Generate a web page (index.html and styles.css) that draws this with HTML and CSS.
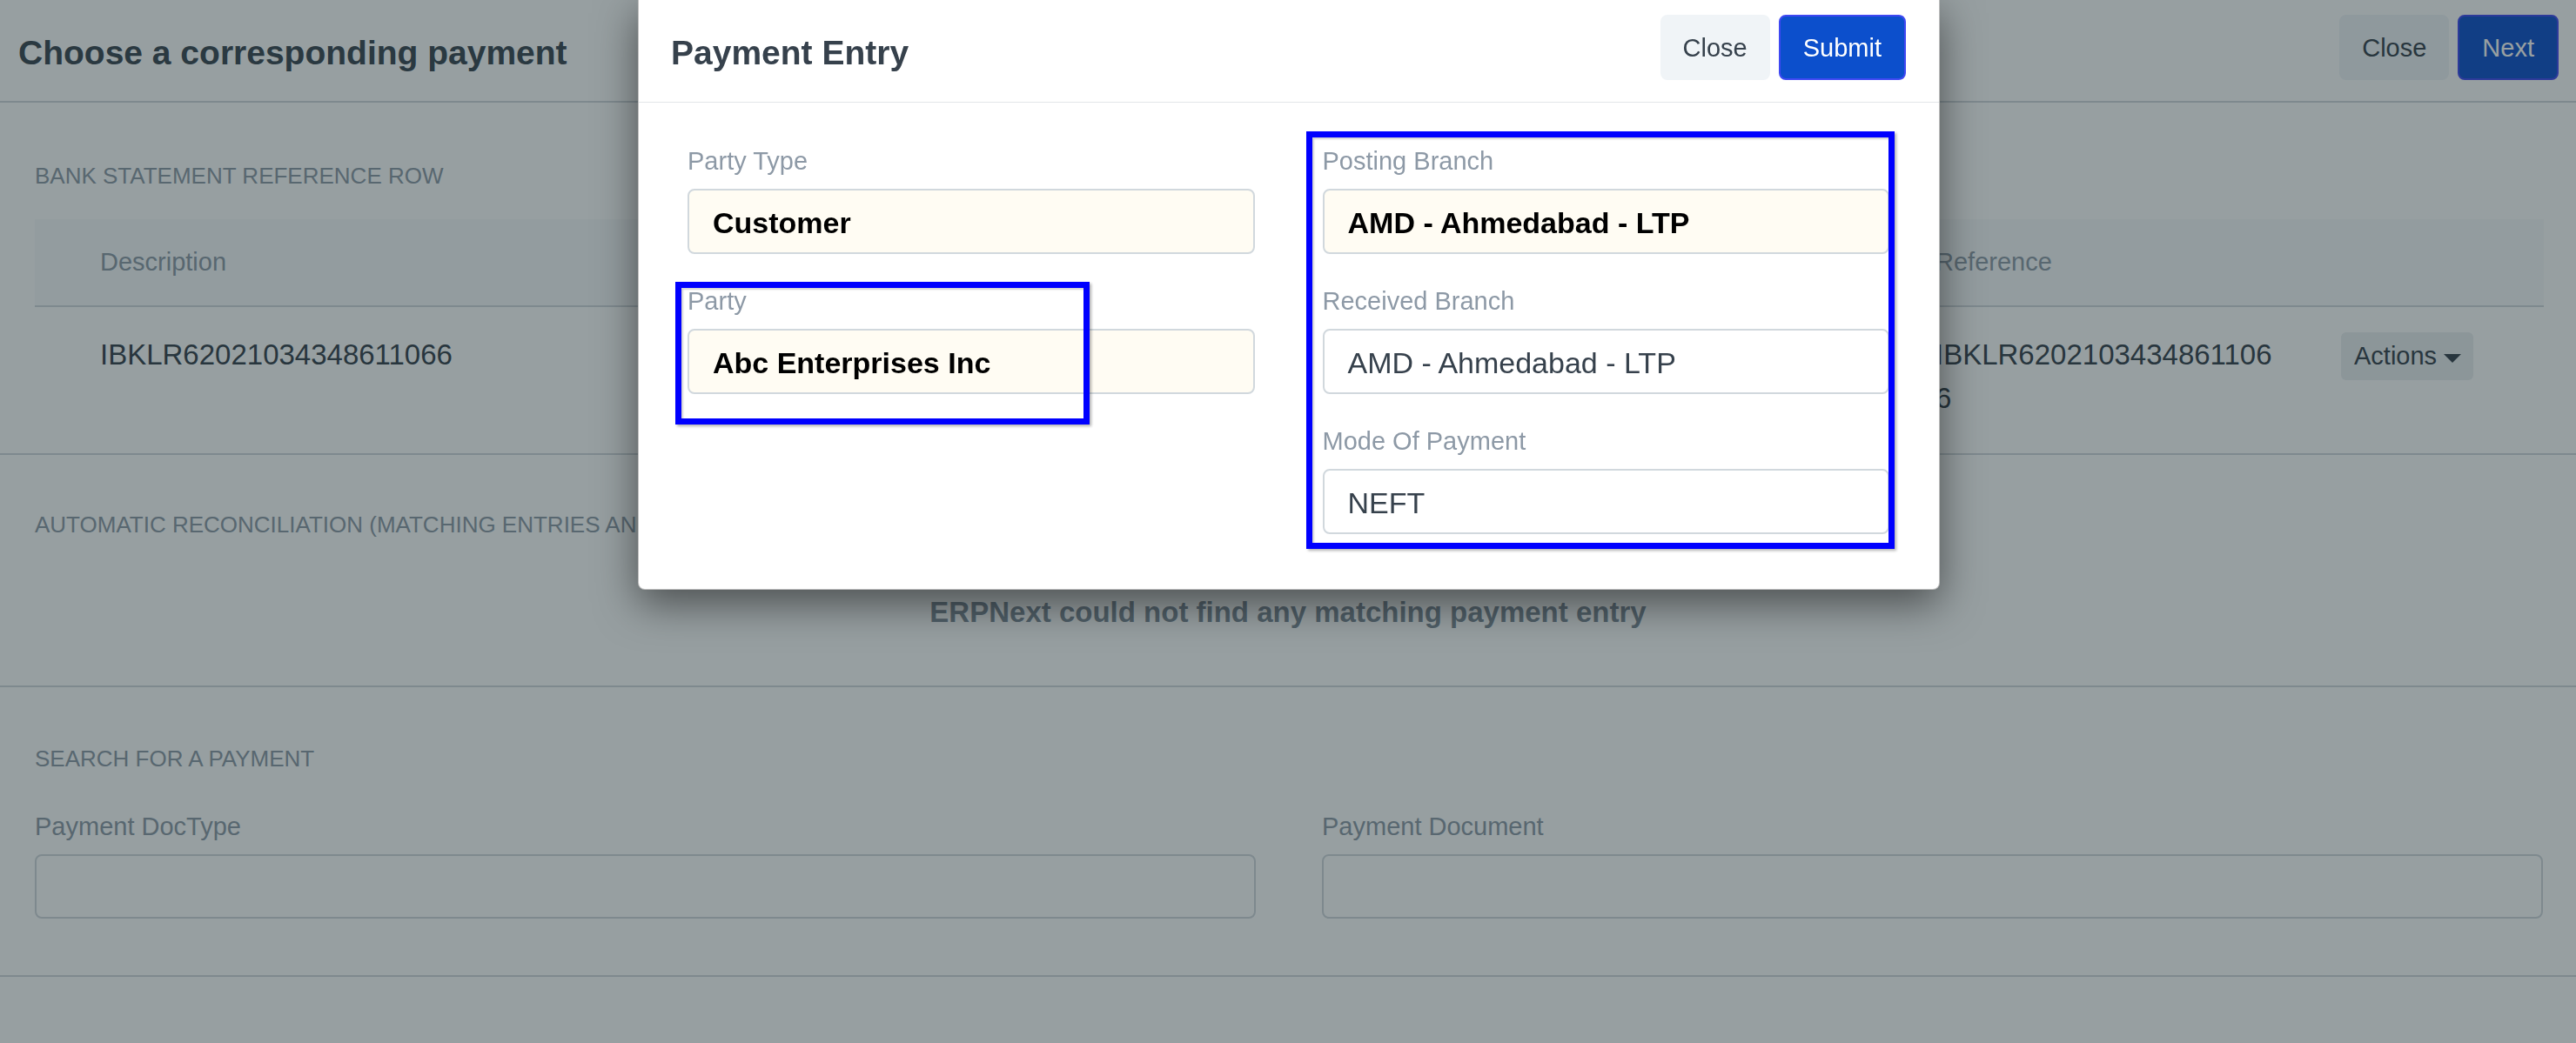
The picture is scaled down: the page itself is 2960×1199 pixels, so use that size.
FILE: index.html
```html
<!DOCTYPE html>
<html lang="en">
<head>
<meta charset="utf-8">
<title>Choose a corresponding payment</title>
<link rel="stylesheet" href="styles.css">
</head>
<body>
<div class="page">
  <header class="page-head">
    <h1 class="page-title">Choose a corresponding payment</h1>
    <div class="head-actions">
      <button class="btn btn-default">Close</button>
      <button class="btn btn-primary">Next</button>
    </div>
  </header>

  <section class="sec sec-ref">
    <h2 class="sec-title">BANK STATEMENT REFERENCE ROW</h2>
    <div class="tbl">
      <div class="tbl-head">
        <div class="cell c-desc">Description</div>
        <div class="cell c-mid"></div>
        <div class="cell c-ref">Reference</div>
        <div class="cell c-act"></div>
      </div>
      <div class="tbl-row">
        <div class="cell c-desc">IBKLR62021034348611066</div>
        <div class="cell c-mid"></div>
        <div class="cell c-ref"><span class="ref-text">IBKLR62021034348611066</span></div>
        <div class="cell c-act">
          <button class="btn-actions">Actions <span class="caret"></span></button>
        </div>
      </div>
    </div>
  </section>

  <section class="sec sec-auto">
    <h2 class="sec-title">AUTOMATIC RECONCILIATION (MATCHING ENTRIES AND AMOUNTS)</h2>
    <p class="empty-msg">ERPNext could not find any matching payment entry</p>
  </section>

  <section class="sec sec-search">
    <h2 class="sec-title">SEARCH FOR A PAYMENT</h2>
    <div class="search-grid">
      <div class="field">
        <label class="field-label">Payment DocType</label>
        <div class="field-input"></div>
      </div>
      <div class="field">
        <label class="field-label">Payment Document</label>
        <div class="field-input"></div>
      </div>
    </div>
  </section>
</div>

<div class="backdrop"></div>

<div class="modal">
  <div class="modal-head">
    <h3 class="modal-title">Payment Entry</h3>
    <div class="head-actions">
      <button class="btn btn-default">Close</button>
      <button class="btn btn-primary btn-submit">Submit</button>
    </div>
  </div>
  <div class="modal-body">
    <div class="col">
      <div class="mfield">
        <div class="mlabel">Party Type</div>
        <div class="minput filled">Customer</div>
      </div>
      <div class="mfield">
        <div class="mlabel">Party</div>
        <div class="minput filled">Abc Enterprises Inc</div>
      </div>
    </div>
    <div class="col">
      <div class="mfield">
        <div class="mlabel">Posting Branch</div>
        <div class="minput filled">AMD - Ahmedabad - LTP</div>
      </div>
      <div class="mfield">
        <div class="mlabel">Received Branch</div>
        <div class="minput">AMD - Ahmedabad - LTP</div>
      </div>
      <div class="mfield">
        <div class="mlabel">Mode Of Payment</div>
        <div class="minput">NEFT</div>
      </div>
    </div>
  </div>
  <div class="mark mark-party"></div>
  <div class="mark mark-branch"></div>
</div>
</body>
</html>
```

FILE: styles.css
```css
* { box-sizing: border-box; }

html, body {
  margin: 0;
  padding: 0;
}

body {
  font-family: "Liberation Sans", Arial, sans-serif;
  background: #ffffff;
  color: #36414c;
  width: 2960px;
  height: 1199px;
  overflow: hidden;
  position: relative;
}

/* ---------- background page ---------- */
.page {
  background: #ffffff;
  min-height: 1199px;
}

.page-head {
  height: 118px;
  border-bottom: 2px solid #d1d8dd;
  display: flex;
  justify-content: space-between;
  align-items: flex-start;
  padding: 17px 20px 0 21px;
}

.page-title {
  margin: 6px 0 0;
  font-size: 39px;
  line-height: 75px;
  font-weight: bold;
  color: #3a4550;
}

.head-actions {
  display: flex;
  gap: 10px;
}

.btn {
  height: 75px;
  border: 2px solid transparent;
  border-radius: 8px;
  font-family: "Liberation Sans", Arial, sans-serif;
  font-size: 29px;
  line-height: 69px;
  padding: 2px 24px 0;
  cursor: pointer;
}

.btn-default {
  background: #f0f4f7;
  border-color: #f0f4f7;
  color: #36414c;
}

.btn-primary {
  background: #0c4fcc;
  border-color: #3f48f2;
  color: #ffffff;
  padding: 2px 26px 0;
}

.sec {
  border-bottom: 2px solid #d1d8dd;
}

.sec-title {
  margin: 0;
  font-size: 26px;
  line-height: 36px;
  font-weight: normal;
  color: #8d99a6;
  white-space: nowrap;
}

.sec-ref {
  padding: 66px 37px 38px 40px;
}

.sec-ref .sec-title {
  margin-bottom: 32px;
}

.tbl-head,
.tbl-row {
  display: grid;
  grid-template-columns: 720px 1464px 466px 1fr;
}

.tbl-head {
  height: 101px;
  background: #f7fafc;
  border-bottom: 2px solid #d1d8dd;
  font-size: 29px;
  line-height: 99px;
  color: #8d99a6;
}

.tbl-row {
  padding-top: 30px;
  font-size: 33px;
  line-height: 50px;
  color: #36414c;
}

.c-desc {
  padding-left: 75px;
}

.ref-text {
  display: block;
  width: 398px;
  word-break: break-all;
}

.btn-actions {
  margin-top: -1px;
  height: 55px;
  padding: 0 14px 0 15px;
  border: none;
  border-radius: 6px;
  background: #ebeef0;
  color: #36414c;
  font-family: "Liberation Sans", Arial, sans-serif;
  font-size: 29px;
  line-height: 55px;
  display: inline-flex;
  align-items: center;
  gap: 8px;
}

.caret {
  display: inline-block;
  width: 0;
  height: 0;
  border-left: 10px solid transparent;
  border-right: 10px solid transparent;
  border-top: 10px solid #36414c;
  margin-top: 4px;
}

.sec-auto {
  padding: 62px 40px 61px;
}

.empty-msg {
  margin: 60px 0 0;
  text-align: center;
  font-size: 33px;
  line-height: 46px;
  font-weight: bold;
  color: #7f8b97;
}

.sec-search {
  padding: 64px 38px 65px 40px;
}

.sec-search .sec-title {
  margin-bottom: 40px;
}

.search-grid {
  display: grid;
  grid-template-columns: 1fr 1fr;
  column-gap: 76px;
}

.field-label {
  display: block;
  font-size: 29px;
  line-height: 40px;
  color: #8d99a6;
  margin-bottom: 12px;
}

.field-input {
  height: 74px;
  border: 2px solid #d1d8dd;
  border-radius: 8px;
  background: #ffffff;
}

/* ---------- backdrop ---------- */
.backdrop {
  position: fixed;
  inset: 0;
  background: rgba(24, 42, 46, 0.45);
  z-index: 10;
}

/* ---------- modal ---------- */
.modal {
  position: absolute;
  top: -1px;
  left: 733px;
  width: 1496px;
  background: #ffffff;
  border: 1px solid rgba(0, 0, 0, 0.25);
  border-radius: 0 0 8px 8px;
  box-shadow: 0 16px 48px rgba(0, 0, 0, 0.5);
  z-index: 20;
}

.modal-head {
  height: 118px;
  border-bottom: 1px solid #e3e6e8;
  display: flex;
  justify-content: space-between;
  align-items: flex-start;
  padding: 17px 38px 0 37px;
}

.modal-title {
  margin: 6px 0 0;
  font-size: 39px;
  line-height: 75px;
  font-weight: bold;
  color: #36414c;
}

.modal-body {
  display: grid;
  grid-template-columns: 1fr 1fr;
  column-gap: 78px;
  padding: 47px 57px 63px 56px;
}

.mfield {
  margin-bottom: 34px;
}

.mfield:last-child {
  margin-bottom: 0;
}

.mlabel {
  font-size: 29px;
  line-height: 40px;
  color: #8d99a6;
  margin-bottom: 12px;
}

.minput {
  height: 75px;
  border: 2px solid #d1d8dd;
  border-radius: 8px;
  padding: 4px 27px 0;
  font-size: 34px;
  line-height: 67px;
  color: #36414c;
  background: #ffffff;
  white-space: nowrap;
  overflow: hidden;
}

.minput.filled {
  background: #fffcf3;
  color: #000000;
  font-weight: bold;
}

/* annotation boxes drawn over the screenshot */
.mark {
  position: absolute;
  border: 7px solid #0000ff;
  box-shadow: 2px 2px 3px rgba(0, 0, 0, 0.3), inset 2px 2px 2px rgba(0, 0, 0, 0.18);
  pointer-events: none;
}

.mark-party {
  left: 42px;
  top: 324px;
  width: 476px;
  height: 164px;
}

.mark-branch {
  left: 767px;
  top: 151px;
  width: 676px;
  height: 480px;
}
```
